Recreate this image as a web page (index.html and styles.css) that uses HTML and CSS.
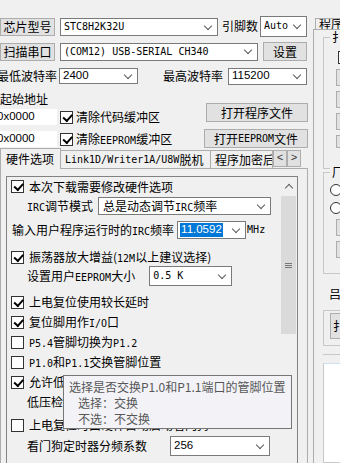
FILE: index.html
```html
<!DOCTYPE html>
<html>
<head>
<meta charset="utf-8">
<link rel="stylesheet" href="styles.css">
</head>
<body>
<div class="app">
  <div class="left">
    <div class="row r1">
      <div class="btn b-chip">芯片型号</div>
      <div class="combo c-chip"><span class="mono">STC8H2K32U</span><span class="dd"></span></div>
      <span class="lbl l-pins">引脚数</span>
      <div class="combo c-auto"><span class="mono">Auto</span><span class="dd"></span></div>
    </div>
    <div class="row r2">
      <div class="btn b-scan">扫描串口</div>
      <div class="combo c-port"><span class="mono">(COM12) USB-SERIAL CH340</span><span class="dd"></span></div>
      <div class="btn b-set">设置</div>
    </div>
    <div class="row r3">
      <span class="lbl l-min">最低波特率</span>
      <div class="combo c-baud"><span class="sans">2400</span><span class="dd"></span></div>
      <span class="lbl l-max">最高波特率</span>
      <div class="combo c-baud2"><span class="sans">115200</span><span class="dd"></span></div>
    </div>
    <div class="addr">
      <div class="addr-left">
        <div class="lbl l-start">起始地址</div>
        <div class="row fr fr1"><div class="field"><span class="sans">0x0000</span></div><span class="cb on"></span><span class="lbl">清除代码缓冲区</span></div>
        <div class="row fr fr2"><div class="field"><span class="sans">0x0000</span></div><span class="cb on"></span><span class="lbl">清除<span class="mono">EEPROM</span>缓冲区</span></div>
      </div>
      <div class="addr-right">
        <div class="btn b-open">打开程序文件</div>
        <div class="btn b-open2">打开<span class="mono">EEPROM</span>文件</div>
      </div>
    </div>
    <div class="tabs">
      <div class="tab sel">硬件选项</div>
      <div class="tab t-link"><span class="mono">Link1D/Writer1A/U8W</span>脱机</div>
      <div class="tab t-enc">程序加密后</div>
      <div class="tab-arrows"><span class="ta">&lt;</span><span class="ta">&gt;</span></div>
    </div>
    <div class="panel">
      <div class="scrollbox">
        <div class="content">
          <div class="row s1"><span class="cb on"></span><span class="lbl">本次下载需要修改硬件选项</span></div>
          <div class="row s2 ind"><span class="lbl"><span class="mono">IRC</span>调节模式</span><div class="combo c-irc"><span>总是动态调节<span class="mono">IRC</span>频率</span><span class="dd"></span></div></div>
          <div class="row s3"><span class="lbl l-freq">输入用户程序运行时的<span class="mono">IRC</span>频率</span><div class="combo c-freq"><span class="sel-text sans">11.0592</span><span class="dd"></span></div><span class="mono mhz">MHz</span></div>
          <div class="row s4"><span class="cb on"></span><span class="lbl">振荡器放大增益(<span class="mono">12M</span>以上建议选择)</span></div>
          <div class="row s5 ind"><span class="lbl">设置用户<span class="mono">EEPROM</span>大小</span><div class="combo c-eep"><span class="mono">0.5 K</span><span class="dd"></span></div></div>
          <div class="row s6"><span class="cb on"></span><span class="lbl">上电复位使用较长延时</span></div>
          <div class="row s7"><span class="cb on"></span><span class="lbl">复位脚用作<span class="mono">I/O</span>口</span></div>
          <div class="row s8"><span class="cb"></span><span class="lbl"><span class="mono">P5.4</span>管脚切换为<span class="mono">P1.2</span></span></div>
          <div class="row s9"><span class="cb"></span><span class="lbl"><span class="mono">P1.0</span>和<span class="mono">P1.1</span>交换管脚位置</span></div>
          <div class="row s10"><span class="cb on"></span><span class="lbl">允许低压复位(禁止低压中断)</span></div>
          <div class="row s11 ind"><span class="lbl">低压检测电压</span></div>
          <div class="row s12"><span class="cb"></span><span class="lbl">上电复位时由硬件自动启动看门狗</span></div>
          <div class="row s13 ind"><span class="lbl l-wdt">看门狗定时器分频系数</span><div class="combo c-wdt"><span class="sans">256</span><span class="dd"></span></div></div>
        </div>
        <div class="sbar">
          <div class="sb-up"><span class="up"></span></div>
          <div class="sb-thumb"><span class="grip"></span></div>
        </div>
      </div>
    </div>
  </div>
  <div class="right">
    <div class="rtab">程序</div>
    <div class="rframe">
      <div class="rgroup g1">
        <div class="gtitle">扌</div>
        <span class="cb on rcb"></span>
        <div class="rbtn"></div>
        <div class="rbtn"></div>
        <div class="rbtn"></div>
        <div class="rbtn short"></div>
      </div>
      <div class="rgroup g2">
        <div class="gtitle">厂</div>
        <span class="radio"></span>
        <span class="radio"></span>
        <div class="rbtn"></div>
        <div class="rbtn"></div>
      </div>
      <div class="rlabel">吕</div>
      <div class="rgroup g3"><div class="rbtn tall">扌</div></div>
      <div class="rline"></div>
      <div class="rbox"></div>
    </div>
  </div>
</div>
<div class="tip">
  <div>选择是否交换P1.0和P1.1端口的管脚位置</div>
  <div class="tip-ind">选择：交换</div>
  <div class="tip-ind">不选：不交换</div>
</div>
</body>
</html>
```
FILE: styles.css
```css
* { box-sizing: border-box; }
html, body { margin: 0; padding: 0; }
body {
  width: 340px; height: 463px; overflow: hidden; position: relative;
  background: #f0f0f0; color: #000;
  font-family: "Noto Sans CJK SC", sans-serif; font-size: 12px; line-height: 1;
}
.mono { font-family: "DejaVu Sans Mono", monospace; font-size: 10px; }
.sans { font-family: "Liberation Sans", sans-serif; font-size: 11.5px; }
.app { display: flex; width: 340px; height: 463px; }
.left { width: 308px; flex: none; display: flex; flex-direction: column; }
.right { flex: 1; display: flex; flex-direction: column; }

.row { display: flex; align-items: center; flex: none; }
.lbl { white-space: nowrap; }

.btn {
  display: flex; align-items: center; justify-content: center; flex: none;
  background: #e1e1e1; border: 1px solid #adadad; white-space: nowrap;
}
.combo {
  display: flex; align-items: center; flex: none; background: #fff;
  border: 1px solid #7a7a7a; padding-left: 3px; padding-right: 6px; white-space: nowrap; overflow: hidden;
}
.dd {
  margin-left: auto; flex: none; width: 6px; height: 6px; margin-top: -3px;
  border-right: 1.6px solid #5a5a5a; border-bottom: 1.6px solid #5a5a5a; transform: rotate(45deg);
}

.r1 { margin-top: 15px; height: 22px; }
.b-chip { width: 55px; height: 18px; margin-top: 2px; }
.c-chip { width: 158px; height: 18px; margin-left: 5px; margin-top: 2px; }
.l-pins { margin-left: 4px; width: 36px; }
.c-auto { width: 47px; height: 21px; margin-left: 2px; }

.r2 { margin-top: 4px; height: 21px; }
.b-scan { width: 55px; height: 18px; }
.c-port { width: 198px; height: 18px; margin-left: 5px; }
.b-set { width: 44px; height: 19px; margin-left: 5px; }

.r3 { margin-top: 6px; height: 16px; }
.l-min { margin-left: -3px; width: 62px; }
.c-baud { width: 79px; height: 16px; }
.l-max { margin-left: 25px; width: 65px; }
.c-baud2 { width: 79px; height: 17px; }

.addr { display: flex; margin-top: 3px; height: 66px; }
.addr-left { width: 200px; display: flex; flex-direction: column; }
.l-start { margin-top: 6px; height: 14px; }
.fr { height: 16px; }
.fr1 { margin-top: 2px; }
.fr2 { margin-top: 6px; }
.field { width: 60px; height: 16px; margin-left: -3px; background: #fff; display: flex; align-items: center; padding-left: 0; }
.cb {
  flex: none; width: 13px; height: 13px; border: 1px solid #333; background: #fff; position: relative; margin-left: 3px; margin-right: 3px;
}
.cb.on::after {
  content: ""; position: absolute; left: 2px; top: 2px; width: 7px; height: 3.5px;
  border-left: 2.2px solid #000; border-bottom: 2.2px solid #000; transform: rotate(-48deg);
}
.addr-right { display: flex; flex-direction: column; align-items: flex-end; flex: 1; }
.b-open { width: 102px; height: 19px; margin-top: 16px; }
.b-open2 { width: 104px; height: 19px; margin-top: 7px; }

.tabs { display: flex; height: 20px; margin-top: 0; align-items: flex-end; position: relative; z-index: 1; }
.tab {
  height: 18px; display: flex; align-items: center; padding-left: 4px; white-space: nowrap; overflow: hidden;
  border: 1px solid #adadad; border-bottom: none; background: #f0f0f0;
}
.tab.sel { height: 21px; width: 61px; padding-left: 5px; margin-bottom: -1px; background: #f0f0f0; }
.t-link { width: 150px; border-left: none; }
.t-enc { width: 62px; border-left: none; }
.tab-arrows { display: flex; height: 17px; margin-bottom: 1px; }
.ta {
  width: 14px; height: 17px; border: 1px solid #adadad; background: #e1e1e1; display: flex; align-items: center; justify-content: center;
  font-family: "Liberation Mono", monospace; font-size: 11px; color: #333;
}
.panel { flex: 1; border: 1px solid #adadad; border-bottom: none; background: #f0f0f0; padding: 7px 9px 0 5px; }
.scrollbox { height: 300px; border: 1px solid #828282; border-bottom: none; display: flex; }
.content { flex: 1; }
.content .row { height: 20px; }
.content .cb { margin-left: 4px; margin-right: 5px; }
.ind { padding-left: 20px; }
.s1 { height: 19px !important; }
.s2 { margin-top: 0; }
.c-irc { width: 173px; height: 18px; margin-left: 5px; padding-left: 4px; }
.s3 { margin-top: 4px; padding-left: 5px; }
.c-freq { width: 69px; height: 18px; margin-left: 3px; padding-left: 2px; }
.sel-text { background: #0078d7; color: #fff; padding: 1px 1px; }
.mhz { margin-left: 1px; }
.s4 { margin-top: 7px; }
.s5 { margin-top: -1px; }
.c-eep { width: 83px; height: 20px; margin-left: 14px; }
.s6 { margin-top: 6px; }
.s10 { margin-top: 0; }
.s11 { margin-top: 0; }
.s12 { margin-top: 3px; }
.s13 { margin-top: 1px; }
.c-wdt { width: 100px; height: 20px; margin-left: 23px; }

.sbar { width: 17px; flex: none; background: #f0f0f0; display: flex; flex-direction: column; }
.sb-up { height: 17px; display: flex; align-items: center; justify-content: center; }
.up { width: 6px; height: 6px; margin-top: 4px; border-left: 1.5px solid #606060; border-top: 1.5px solid #606060; transform: rotate(45deg); }
.sb-thumb { margin: 2px 1px 0 1px; height: 138px; background: #dadada; display: flex; align-items: center; justify-content: center; }
.grip { width: 7px; height: 5px; border-top: 1px solid #777; border-bottom: 1px solid #777; position: relative; }
.grip::after { content: ""; position: absolute; left: 0; right: 0; top: 1px; border-top: 1px solid #777; }

.rtab {
  margin-top: 18px; margin-left: 7px; height: 19px; border: 1px solid #adadad; border-right: none; border-bottom: none;
  display: flex; align-items: center; padding-left: 3px; white-space: nowrap; overflow: hidden; background: #f0f0f0;
}
.rframe { flex: 1; margin-left: 5px; border-left: 1px solid #adadad; border-top: 1px solid #adadad; background: #f0f0f0; padding-left: 9px; display: flex; flex-direction: column; }
.rgroup { border: 1px solid #c8c8c8; border-right: none; display: flex; flex-direction: column; align-items: flex-start; padding-left: 4px; }
.g1 { margin-top: 7px; height: 132px; }
.gtitle { margin-top: -7px; background: #f0f0f0; padding: 0 2px; margin-left: 2px; }
.rcb { margin-top: 8px; margin-left: 10px; }
.rbtn { width: 20px; height: 17px; margin-top: 5px; margin-left: 8px; border: 1px solid #adadad; background: #e1e1e1; }
.rbtn.short { height: 13px; }
.g2 { margin-top: 3px; height: 102px; }
.radio { width: 12px; height: 12px; border: 1px solid #333; border-radius: 50%; background: #fff; margin-top: 6px; margin-left: 2px; }
.rlabel { margin-top: 14px; margin-left: 6px; }
.g3 { margin-top: 10px; height: 36px; padding: 2px 0 0 6px; }
.rbtn.tall { height: 26px; margin: 0; display: flex; align-items: center; padding-left: 2px; }
.rline { margin-top: 8px; border-top: 1px solid #c8c8c8; }
.rbox { margin-top: 8px; height: 100px; border: 1px solid #c8c8c8; border-right: none; border-top-color: #cfe0f0; background: #fff; }

.tip {
  position: absolute; left: 63px; top: 375px; width: 229px; height: 54px;
  background: #f2f2f7; border: 1px solid #767676; color: #575757;
  padding: 3px 0 0 5px; font-size: 12px; line-height: 16px; z-index: 5;
}
.tip-ind { padding-left: 9px; }
```
